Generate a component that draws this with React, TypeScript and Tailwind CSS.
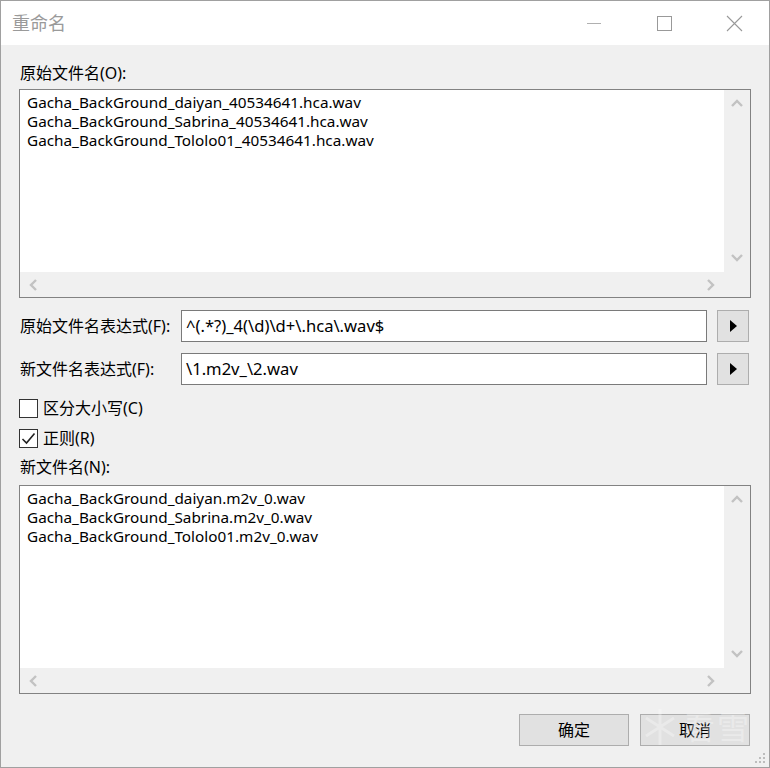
import type { ReactNode } from 'react'

const FONT = { fontFamily: '"Noto Sans", "Noto Sans CJK SC", sans-serif' }

const original = [
  'Gacha_BackGround_daiyan_40534641.hca.wav',
  'Gacha_BackGround_Sabrina_40534641.hca.wav',
  'Gacha_BackGround_Tololo01_40534641.hca.wav',
]

const renamed = [
  'Gacha_BackGround_daiyan.m2v_0.wav',
  'Gacha_BackGround_Sabrina.m2v_0.wav',
  'Gacha_BackGround_Tololo01.m2v_0.wav',
]

function Chevron({ dir }: { dir: 'up' | 'down' | 'left' | 'right' }) {
  const d = {
    up: 'M2 9 L7 4 L12 9',
    down: 'M2 4 L7 9 L12 4',
    left: 'M9 2 L4 7 L9 12',
    right: 'M5 2 L10 7 L5 12',
  }[dir]
  return (
    <svg width="14" height="14" viewBox="0 0 14 14">
      <path d={d} fill="none" stroke="#c2c2c2" strokeWidth="2.4" />
    </svg>
  )
}

function ListBox({ lines, className = '' }: { lines: string[]; className?: string }) {
  return (
    <div
      className={`grid h-[209px] grid-cols-[1fr_26px] grid-rows-[1fr_25px] border border-[#828282] bg-white ${className}`}
    >
      <div className="px-[7px] pt-[3px] text-[15.3px] leading-[19px] text-black">
        {lines.map((l) => (
          <div key={l}>{l}</div>
        ))}
      </div>
      {/* 垂直捲軸 */}
      <div className="flex flex-col items-center justify-between bg-[#f0f0f0] py-[7px]">
        <Chevron dir="up" />
        <Chevron dir="down" />
      </div>
      {/* 水平捲軸 */}
      <div className="flex items-center justify-between bg-[#f0f0f0] px-[7px]">
        <Chevron dir="left" />
        <Chevron dir="right" />
      </div>
      <div className="bg-[#f0f0f0]" />
    </div>
  )
}

function ExprRow({ label, value, className = '' }: { label: string; value: string; className?: string }) {
  return (
    <div className={`flex h-[32px] items-center ${className}`}>
      <span className="w-[162px] shrink-0 pl-px text-[16px]">{label}</span>
      <div className="flex h-full w-[526px] items-center border border-[#7a7a7a] bg-white px-[4px] text-[16.6px]">
        {value}
      </div>
      <button
        type="button"
        className="ml-[10px] flex h-full w-[32px] items-center justify-center border border-[#adadad] bg-[#e1e1e1]"
      >
        <svg width="8" height="12" viewBox="0 0 8 12">
          <path d="M1 0 L8 6 L1 12 Z" fill="#000" />
        </svg>
      </button>
    </div>
  )
}

function Check({ checked, children, className = '' }: { checked?: boolean; children: ReactNode; className?: string }) {
  return (
    <label className={`flex h-[20px] items-center ${className}`}>
      <span className="flex h-[19px] w-[19px] items-center justify-center border border-[#333] bg-white">
        {checked && (
          <svg width="15" height="13" viewBox="0 0 15 13">
            <path d="M1.5 7 L5.5 11 L13.5 1.5" fill="none" stroke="#222" strokeWidth="1.6" />
          </svg>
        )}
      </span>
      <span className="ml-[5px] text-[16px]">{children}</span>
    </label>
  )
}

function DlgButton({ children }: { children: ReactNode }) {
  return (
    <button
      type="button"
      className="flex h-[32px] w-[110px] items-center justify-center border border-[#adadad] bg-[#e1e1e1] text-[16px]"
    >
      {children}
    </button>
  )
}

export default function App() {
  return (
    <div
      className="relative flex h-[768px] w-[770px] flex-col border border-[#a0a0a0] bg-[#f0f0f0] text-[15px] text-black"
      style={FONT}
    >
      {/* 標題列 */}
      <div className="flex h-[44px] shrink-0 items-center bg-white">
        <span className="pl-[11px] text-[18px] text-[#9a9a9a]">重命名</span>
        <div className="ml-auto flex h-full items-center">
          <div className="flex h-full w-[70px] items-center justify-center">
            <span className="block h-px w-[14px] bg-[#b0b0b0]" />
          </div>
          <div className="flex h-full w-[70px] items-center justify-center">
            <span className="block h-[15px] w-[15px] border border-[#999]" />
          </div>
          <div className="flex h-full w-[70px] items-center justify-center pl-px">
            <svg width="17" height="17" viewBox="0 0 17 17">
              <path d="M1 1 L16 16 M16 1 L1 16" stroke="#999" strokeWidth="1.1" />
            </svg>
          </div>
        </div>
      </div>

      {/* 內容 */}
      <div className="flex flex-col px-[18px] pt-[19px]">
        <div className="h-[19px] pl-px text-[16px] leading-[19px]">原始文件名(O):</div>
        <ListBox lines={original} className="mt-[6px]" />

        <ExprRow label="原始文件名表达式(F):" value="^(.*?)_4(\d)\d+\.hca\.wav$" className="mt-[12px]" />
        <ExprRow label="新文件名表达式(F):" value="\1.m2v_\2.wav" className="mt-[11px]" />

        <Check className="mt-[13px]">区分大小写(C)</Check>
        <Check checked className="mt-[10px]">
          正则(R)
        </Check>

        <div className="mt-[10px] h-[19px] pl-px text-[16px] leading-[19px]">新文件名(N):</div>
        <ListBox lines={renamed} className="mt-[8px]" />

        <div className="mt-[20px] flex justify-end gap-[11px] pr-px">
          <DlgButton>确定</DlgButton>
          <DlgButton>取消</DlgButton>
        </div>
      </div>

      {/* 浮水印 */}
      <div className="pointer-events-none absolute left-[642px] top-[706px] flex items-center gap-[6px] whitespace-nowrap opacity-30">
        <svg width="34" height="40" viewBox="0 0 34 40">
          <g stroke="#ffffff" strokeWidth="3" fill="none">
            <path d="M17 2 V38 M3 11 L31 29 M31 11 L3 29" />
          </g>
        </svg>
        <span className="text-[32px] leading-none tracking-[2px] text-white">看雪</span>
      </div>

      {/* 尺寸握把 */}
      <svg className="absolute bottom-[3px] right-[3px]" width="12" height="12" viewBox="0 0 12 12">
        <g fill="#bdbdbd">
          <rect x="9" y="1" width="2" height="2" />
          <rect x="5" y="5" width="2" height="2" />
          <rect x="9" y="5" width="2" height="2" />
          <rect x="1" y="9" width="2" height="2" />
          <rect x="5" y="9" width="2" height="2" />
          <rect x="9" y="9" width="2" height="2" />
        </g>
      </svg>
    </div>
  )
}
